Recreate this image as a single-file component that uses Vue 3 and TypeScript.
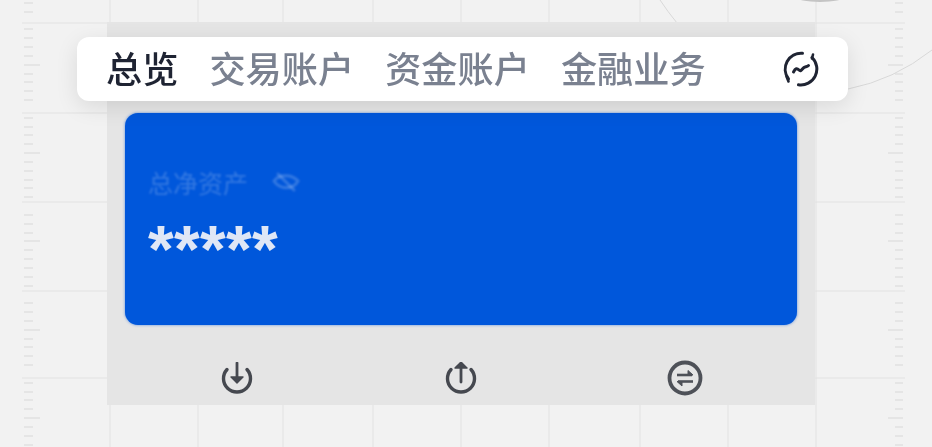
<template>
  <div class="page">
    <svg class="canvas" width="932" height="447" viewBox="0 0 932 447">
      <g stroke="#e2e2e2" stroke-width="1">
        <line v-for="x in columnLines" :key="x" :x1="x" y1="0" :x2="x" y2="447" />
        <line v-for="y in rowLines" :key="y" x1="22" :y1="y" x2="905" :y2="y" />
      </g>
      <g stroke="#dcdcdc" stroke-width="1.2">
        <template v-for="t in ticks" :key="t.y">
          <line x1="24" :y1="t.y" :x2="t.long ? 40 : 33" :y2="t.y" />
          <line :x1="t.long ? 888 : 895" :y1="t.y" x2="903" :y2="t.y" />
        </template>
      </g>
      <path d="M660 0 Q668 12 677 23" fill="none" stroke="#d8d8d8" />
      <path d="M848 89 Q894 80 932 50" fill="none" stroke="#d8d8d8" />
      <ellipse cx="820" cy="-3" rx="24" ry="5" fill="#c4c4c4" />
    </svg>

    <div class="panel">
      <nav class="tabs">
        <a v-for="(tab, i) in tabs" :key="tab" class="tab" :class="{ active: i === 0 }">{{ tab }}</a>
        <svg class="trend" width="36" height="36" viewBox="0 0 36 36" fill="none" stroke="#1f2433" stroke-width="3" stroke-linecap="round" stroke-linejoin="round">
          <path d="M5.5 28 A16 16 0 0 1 19.5 2.3" />
          <path d="M29 6.5 A16 16 0 0 1 15.5 33.8" />
          <path d="M3.5 25.5 L5.5 30.5" stroke-width="2.6" />
          <path d="M30 3.5 L29 7.5" stroke-width="2.6" />
          <path d="M10.5 21 C12.5 17 14 17 16 19 C18 21 19 18 21 16.5 C22.5 15.5 24 16 25.5 14.5" stroke-width="3" />
        </svg>
      </nav>

      <section class="card">
        <div class="label">
          <span>总净资产</span>
          <svg width="28" height="22" viewBox="0 0 28 22" fill="none" stroke="currentColor" stroke-width="3" stroke-linecap="round">
            <path d="M2 10 C7 3 20 3 26 10 C21 19 8 19 2 10 Z" />
            <path d="M6 3 L22 19" />
          </svg>
        </div>
        <div class="amount">*****</div>
      </section>

      <div class="actions">
        <button class="action">
          <svg width="32" height="32" viewBox="0 0 32 32" fill="none" stroke="#45484f" stroke-width="3.4" stroke-linecap="round" stroke-linejoin="round">
            <path d="M6 7.5 A13.5 13.5 0 1 0 26 7.5" />
            <path d="M16 1 V17" stroke-width="2.8" />
            <path d="M10 15 L16 21 L22 15 Z" fill="#45484f" stroke-width="1.4" />
          </svg>
        </button>
        <button class="action">
          <svg width="32" height="32" viewBox="0 0 32 32" fill="none" stroke="#45484f" stroke-width="3.4" stroke-linecap="round" stroke-linejoin="round">
            <path d="M6 7.5 A13.5 13.5 0 1 0 26 7.5" />
            <path d="M16 4 V20" stroke-width="2.8" />
            <path d="M10 6 L16 0 L22 6 Z" fill="#45484f" stroke-width="1.4" />
          </svg>
        </button>
        <button class="action">
          <svg width="36" height="36" viewBox="0 0 36 36" fill="none" stroke="#4e5158" stroke-width="3.8" stroke-linejoin="round">
            <circle cx="18" cy="18" r="15.5" />
            <path d="M10 15 H25" stroke-width="2.6" />
            <path d="M21 10.5 L26 15 H21 Z" fill="#4e5158" stroke-width="1" />
            <path d="M26 21.5 H11" stroke-width="2.6" />
            <path d="M15 26 L10 21.5 H15 Z" fill="#4e5158" stroke-width="1" />
          </svg>
        </button>
      </div>
    </div>
  </div>
</template>

<script setup lang="ts">
  const tabs = ['总览', '交易账户', '资金账户', '金融业务']
  const columnLines = [110, 198, 283, 373, 461, 549, 640, 728, 816]
  const rowLines = [23, 113, 202, 291, 378]

  // ruler ticks down both sides, every tenth one is longer, skipped next to a grid line
  const ticks: { y: number; long: boolean }[] = []
  for (let k = 0; k < 51; k++) {
    const y = Math.round(3 + 8.83 * k)
    if (rowLines.some((r) => Math.abs(r - y) < 5)) continue
    ticks.push({ y, long: k % 10 === 7 })
  }
</script>

<style scoped>
  .page {
    position: relative;
    width: 932px;
    height: 447px;
    overflow: hidden;
    background: #f2f2f2;
    font-family: 'Noto Sans CJK SC', 'Noto Sans', sans-serif;
  }
  .canvas {
    position: absolute;
    left: 0;
    top: 0;
    filter: blur(0.6px);
  }
  .panel {
    position: relative;
    box-sizing: border-box;
    width: 708px;
    height: 383px;
    margin-left: 107px;
    top: 22px;
    padding-top: 15px;
    background: #e5e5e5;
  }
  .tabs {
    display: flex;
    align-items: center;
    gap: 31px;
    box-sizing: border-box;
    height: 64px;
    margin: 0 -33px 0 -30px;
    padding: 0 29px 0 29px;
    background: #fff;
    border-radius: 12px;
    box-shadow: 0 6px 22px rgba(0, 0, 0, 0.1);
    position: relative;
    z-index: 1;
  }
  .tab {
    font-size: 36.2px;
    line-height: 60px;
    margin-bottom: 4px;
    font-weight: 500;
    color: #7a8190;
    white-space: nowrap;
    filter: blur(0.5px);
  }
  .tab.active {
    color: #1f2433;
  }
  .trend {
    margin-left: auto;
    filter: blur(0.4px);
  }
  .card {
    box-sizing: border-box;
    height: 212px;
    margin: 12px 18px 0;
    padding: 52px 23px 0;
    background: #0057db;
    border-radius: 13px;
    box-shadow: 0 0 3px rgba(0, 87, 219, 0.6);
  }
  .label {
    display: flex;
    align-items: center;
    gap: 24px;
    height: 34px;
    font-size: 25px;
    color: rgba(255, 255, 255, 0.2);
    filter: blur(0.8px);
  }
  .amount {
    margin-top: 12px;
    height: 60px;
    font-family: 'Liberation Sans', sans-serif;
    font-weight: 700;
    font-size: 66px;
    line-height: 76px;
    letter-spacing: 0.3px;
    color: #dfe7f6;
    filter: blur(0.7px);
  }
  .actions {
    display: grid;
    grid-template-columns: repeat(3, 1fr);
    margin: 0 18px;
    height: 80px;
    padding-top: 26px;
    box-sizing: border-box;
  }
  .action {
    display: flex;
    align-items: center;
    justify-content: center;
    padding: 0;
    background: none;
    border: none;
    filter: blur(0.7px);
  }
</style>
